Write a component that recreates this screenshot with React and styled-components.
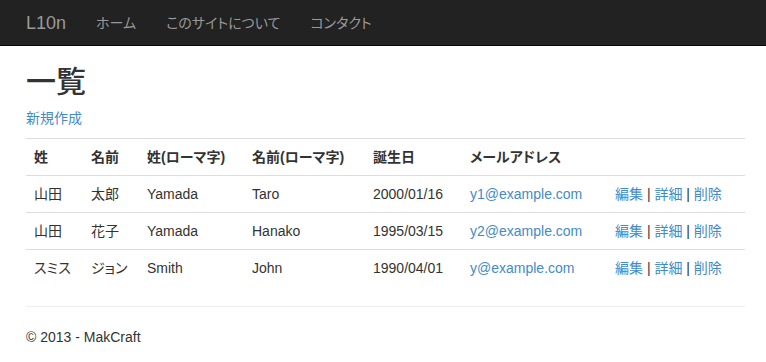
import React from 'react';
import styled, { createGlobalStyle } from 'styled-components';

const people = [
  { id: 1, sei: '山田', mei: '太郎', seiRoma: 'Yamada', meiRoma: 'Taro', birth: '2000/01/16', mail: 'y1@example.com' },
  { id: 2, sei: '山田', mei: '花子', seiRoma: 'Yamada', meiRoma: 'Hanako', birth: '1995/03/15', mail: 'y2@example.com' },
  { id: 3, sei: 'スミス', mei: 'ジョン', seiRoma: 'Smith', meiRoma: 'John', birth: '1990/04/01', mail: 'y@example.com' },
];

const colWidths = [57, 56, 105, 121, 97, 145, 138];

function App() {
  return (
    <>
      <GlobalStyle />
      <Navbar>
        <Brand href='#'>L10n</Brand>
        <NavLink href='#'>ホーム</NavLink>
        <NavLink href='#'>このサイトについて</NavLink>
        <NavLink href='#'>コンタクト</NavLink>
      </Navbar>
      <Container>
        <Title>一覧</Title>
        <Para>
          <Link href='#'>新規作成</Link>
        </Para>
        <Table>
          <colgroup>
            {colWidths.map((w, i) => (
              <col key={i} style={{ width: w }} />
            ))}
          </colgroup>
          <thead>
            <tr>
              <th>姓</th>
              <th>名前</th>
              <th>姓(ローマ字)</th>
              <th>名前(ローマ字)</th>
              <th>誕生日</th>
              <th>メールアドレス</th>
              <th></th>
            </tr>
          </thead>
          <tbody>
            {people.map((p) => (
              <tr key={p.id}>
                <td>{p.sei}</td>
                <td>{p.mei}</td>
                <td>{p.seiRoma}</td>
                <td>{p.meiRoma}</td>
                <td>{p.birth}</td>
                <td>
                  <Link href='#'>{p.mail}</Link>
                </td>
                <td>
                  <Link href='#'>編集</Link> | <Link href='#'>詳細</Link> |{' '}
                  <Link href='#'>削除</Link>
                </td>
              </tr>
            ))}
          </tbody>
        </Table>
        <Rule />
        <Footer>© 2013 - MakCraft</Footer>
      </Container>
    </>
  );
}

const GlobalStyle = createGlobalStyle`
  html, body {
    margin: 0;
    background: #fff;
  }
  body {
    font-family: 'Liberation Sans', Arial, 'Noto Sans CJK JP', sans-serif;
    font-size: 14px;
    line-height: 20px;
    color: #333;
    font-feature-settings: 'palt';
  }
`;

const Navbar = styled.nav`
  display: flex;
  align-items: center;
  height: 45px;
  padding: 0 11px;
  background-color: #222;
  border-bottom: 1px solid #080808;
`;

const Brand = styled.a`
  padding: 0 15px;
  font-size: 18px;
  line-height: 20px;
  color: #999;
  text-decoration: none;
`;

const NavLink = styled.a`
  padding: 0 15px;
  font-size: 14px;
  color: #999;
  text-decoration: none;
`;

const Container = styled.div`
  padding: 0 21px 0 26px;
`;

const Title = styled.h2`
  margin: 19px 0 10px;
  font-size: 30px;
  font-weight: 500;
  line-height: 33px;
`;

const Para = styled.p`
  margin: 0 0 10px;
`;

const Link = styled.a`
  color: #428bca;
  text-decoration: none;
`;

const Table = styled.table`
  width: 100%;
  margin-bottom: 20px;
  border-collapse: collapse;
  table-layout: fixed;

  th,
  td {
    padding: 8px;
    text-align: left;
    vertical-align: top;
    line-height: 20px;
    white-space: nowrap;
  }

  th {
    font-weight: bold;
    border-top: 1px solid #ddd;
    border-bottom: 1px solid #ddd;
  }

  tbody tr + tr td {
    border-top: 1px solid #ddd;
  }
`;

const Rule = styled.hr`
  margin: 0 0 20px;
  border: 0;
  border-top: 1px solid #eee;
`;

const Footer = styled.p`
  margin: 0 0 10px;
`;

export default App;
